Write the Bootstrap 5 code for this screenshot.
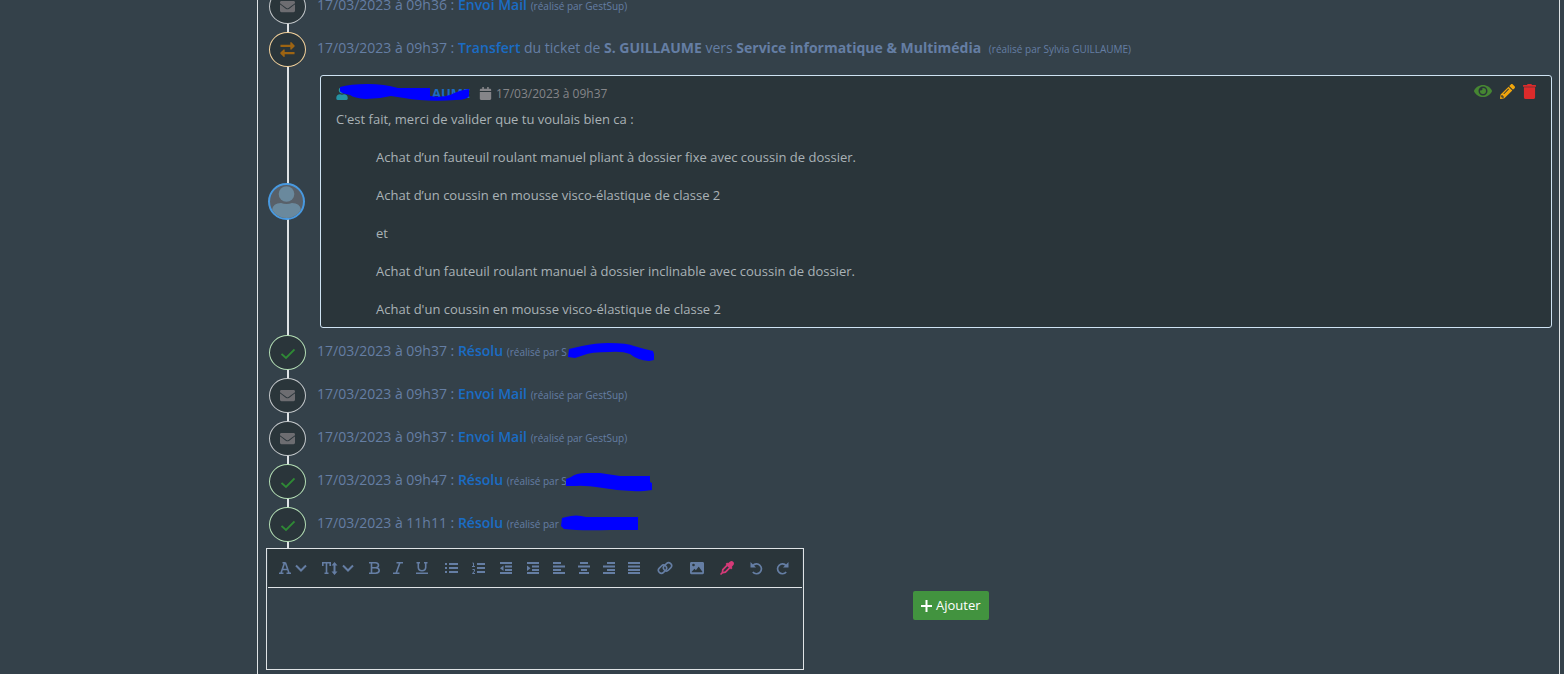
<!DOCTYPE html>
<html lang="fr">
<head>
<meta charset="utf-8">
<meta name="viewport" content="width=device-width, initial-scale=1">
<title>GestSup - Ticket</title>
<link href="https://cdn.jsdelivr.net/npm/bootstrap@5.3.0/dist/css/bootstrap.min.css" rel="stylesheet">
<style>
  :root { --page: #34414a; --deep: #2a353a; --ink: #657ea4; --line: #dfe3e6; }
  body { background: var(--page); color: var(--ink); font-family: "Open Sans", "Noto Sans", sans-serif; font-size: 14px; line-height: 20px; }
  svg { fill: currentColor; display: block; flex: none; }
  .viewport-clip { height: 100vh; overflow: hidden; padding-left: 257px; padding-right: 4px; }
  .ticket { display: flow-root; border: solid var(--line); border-width: 0 1px; min-height: 100vh; padding: 0 7px 0 8px; }
  .timeline { position: relative; margin-top: -11px; padding-bottom: 6px; }
  .timeline::before { content: ""; position: absolute; left: 21px; top: 0; bottom: 0; width: 2px; background: var(--line); }
  .event { position: relative; height: 35px; margin-bottom: 8px; padding-left: 3px; }
  .event:last-child { margin-bottom: 0; }
  .dot { width: 37px; height: 35px; border: 1px solid #c4c8cb; border-radius: 50%; background: var(--deep); color: #6d6d71; flex: none; }
  .dot-ok { border-color: #b4deb5; color: #2f8a35; }
  .dot-move { border-color: #f3d19b; color: #9d6412; }
  .label { margin-left: 11px; padding-bottom: 3px; white-space: nowrap; }
  .label a, .author { color: #1a6cc4; text-decoration: none; font-weight: 600; }
  .label b { font-weight: 700; }
  .by { font-size: 10px; }
  .hidden-name { position: relative; display: inline-block; width: 90px; }
  .hidden-name svg, .author svg { position: absolute; fill: #00f; }
  .hidden-name svg { left: -1px; top: -15px; }
  .author { position: relative; width: 123px; padding-left: 84px; font-weight: 700; font-size: 13px; }
  .author svg { left: -10px; top: 0; }
  .reply { position: relative; padding-left: 2px; margin-bottom: 7px; }
  .avatar { width: 37px; height: 37px; border: 2px solid #4899e0; border-radius: 50%; background: #586069; color: #6a899d; overflow: hidden; flex: none; }
  .message { margin-left: 15px; border: 1px solid #cfe3f3; border-radius: 3px; background: var(--deep); color: #a9b2b6; font-size: 13px; line-height: 19px; padding: 8px 15px 8px; min-width: 0; }
  .message header { color: #858589; height: 18px; margin-bottom: 8px; }
  .message time { font-size: 12px; }
  .message p { margin: 0 0 19px; }
  .message p:last-child { margin-bottom: 0; }
  .quote { margin: 19px 0 0 40px; }
  .tool { background: none; border: 0; padding: 0; }
  .editor { width: 538px; max-width: 100%; border: 1px solid var(--line); }
  .bar { background: var(--deep); height: 39px; margin: 0 1px; padding-left: 8px; border-bottom: 1px solid var(--line); }
  .bar button { background: none; border: 0; padding: 0; color: var(--ink); height: 36px; font: 15px/18px "DejaVu Serif", serif; flex: none; }
  .w-pick { width: 34px; } .w-size { width: 40px; } .w-char { width: 24px; } .w-list { width: 27px; } .w-align { width: 25px; } .w-item { width: 30px; } .w-undo { width: 28px; }
  .lines { fill: none; stroke: currentColor; stroke-width: 2; }
  .area { background: transparent; border: 0; resize: none; height: 81px; color: #a9b2b6; outline: 0; padding: 8px; }
  .glyph { fill: none; stroke: currentColor; stroke-width: 1.6; }
  .btn-add { background: #42933f; color: #fff; border: 0; border-radius: 2px; font-size: 13px; line-height: 19px; padding: 5px 8px; margin: 43px 0 0 109px; }
  .btn-add:hover { background: #37803a; color: #fff; }
</style>
</head>
<body>
<svg width="0" height="0" class="position-absolute" aria-hidden="true">
  <symbol id="mail" viewBox="0 0 512 512"><path d="M502.3 190.8c3.9-3.1 9.7-.2 9.7 4.7V400c0 26.5-21.5 48-48 48H48c-26.5 0-48-21.5-48-48V195.6c0-5 5.7-7.8 9.7-4.7 22.4 17.4 52.1 39.5 154.1 113.6 21.1 15.4 56.7 47.8 92.2 47.6 35.7.3 72-32.8 92.3-47.6 102-74.1 131.6-96.3 154-113.7zM256 320c23.2.4 56.6-29.2 73.4-41.4 132.7-96.3 142.8-104.7 173.4-128.7 5.8-4.5 9.2-11.5 9.2-18.9v-19c0-26.5-21.5-48-48-48H48c-26.5 0-48 21.5-48 48v19c0 7.4 3.4 14.3 9.2 18.9 30.6 23.9 40.7 32.4 173.4 128.7 16.8 12.2 50.2 41.8 73.4 41.4z"/></symbol>
  <symbol id="check" viewBox="0 0 14 14"><path d="M.5 8 5 12 13.500 3.500" fill="none" stroke="currentColor" stroke-width="1.8"/></symbol>
  <symbol id="swap" viewBox="0 0 16 16"><path d="M.5 3H11V.6q.4-.9 1.200-.3l3.300 3.300q.5.600 0 1.200l-3.300 3.200q-.8.500-1.200-.3V5.300H.5zM15.500 13H5v2.400q-.4.900-1.200.3L.5 12.400q-.5-.6 0-1.200L3.800 8q.8-.5 1.200.3v2.400h10.500z"/></symbol>
  <symbol id="chev" viewBox="0 0 12 8"><path d="M1 1.500 6 6.500l5-5" fill="none" stroke="currentColor" stroke-width="2"/></symbol>
</svg>

<div class="viewport-clip">
<main class="ticket">
  <section class="timeline">
    <div class="event d-flex align-items-center"><span class="dot d-flex align-items-center justify-content-center"><svg width="15" height="15"><use href="#mail"/></svg></span>
      <div class="label">17/03/2023 à 09h36 : <a href="#">Envoi Mail</a> <span class="by">(réalisé par GestSup)</span></div></div>
    <div class="event d-flex align-items-center"><span class="dot dot-move d-flex align-items-center justify-content-center"><svg width="15" height="15"><use href="#swap"/></svg></span>
      <div class="label">17/03/2023 à 09h37 : <a href="#">Transfert</a> du ticket de <b>S. GUILLAUME</b> vers <b>Service informatique &amp; Multimédia</b> <span class="by ms-1">(réalisé par Sylvia GUILLAUME)</span></div></div>

    <div class="reply d-flex align-items-center">
      <span class="avatar"><svg width="33" height="33" viewBox="0 0 33 33"><circle cx="16.500" cy="9" r="7.800"/><path d="M2 25q1-7 9-7 5.500 2 11 0 8 0 9 7v8H2z"/></svg></span>
      <article class="message flex-grow-1">
        <header class="d-flex align-items-center">
          <svg width="12" height="13" viewBox="0 0 448 512" color="#2592a2"><path d="M224 256c70.700 0 128-57.300 128-128S294.700 0 224 0 96 57.300 96 128s57.300 128 128 128zm89.600 32h-16.700c-22.200 10.200-46.900 16-72.900 16s-50.600-5.800-72.900-16h-16.700C60.200 288 0 348.200 0 422.400V464c0 26.500 21.500 48 48 48h352c26.500 0 48-21.500 48-48v-41.600c0-74.200-60.200-134.400-134.400-134.400z"/></svg>
          <span class="author">AUME<svg width="132" height="20" viewBox="0 0 132 20" aria-hidden="true"><path d="M2 3Q12 0 30 0q16 0 30 4h32v8q10 2 20-1 10-5 19-6v7q-2 4-13 4-30 2-52-2l-13-2q-12 3-25 3-12-1-16-4-10-2-10-4z"/></svg></span>
          <svg class="ms-2 me-1" width="13" height="13" viewBox="0 0 448 512"><path d="M12 192h424c6.600 0 12 5.400 12 12v260c0 26.500-21.500 48-48 48H48c-26.500 0-48-21.500-48-48V204c0-6.600 5.400-12 12-12zm436-44v-36c0-26.500-21.500-48-48-48h-48V12c0-6.600-5.400-12-12-12h-40c-6.600 0-12 5.400-12 12v52H160V12c0-6.600-5.400-12-12-12h-40c-6.600 0-12 5.400-12 12v52H48C21.500 64 0 85.500 0 112v36c0 6.600 5.400 12 12 12h424c6.600 0 12-5.400 12-12z"/></svg>
          <time datetime="2023-03-17T09:37">17/03/2023 à 09h37</time>
          <div class="d-flex align-items-center gap-2 ms-auto pb-1">
            <button class="tool" type="button" aria-label="Voir"><svg width="18" height="16" viewBox="0 0 576 512" color="#468632"><path d="M572.520 241.400C518.290 135.590 410.930 64 288 64S57.680 135.640 3.480 241.410a32.350 32.350 0 0 0 0 29.190C57.710 376.410 165.070 448 288 448s230.320-71.640 284.520-177.410a32.350 32.350 0 0 0 0-29.190zM288 400a144 144 0 1 1 144-144 143.930 143.930 0 0 1-144 144zm0-240a95.310 95.310 0 0 0-25.310 3.790 47.850 47.850 0 0 1-66.900 66.900A95.780 95.780 0 1 0 288 160z"/></svg></button>
            <button class="tool" type="button" aria-label="Modifier"><svg width="15" height="15" viewBox="0 0 512 512" color="#f0a50c"><path d="M497.900 142.100l-46.100 46.100c-4.700 4.700-12.300 4.700-17 0l-111-111c-4.700-4.700-4.700-12.300 0-17l46.100-46.100c18.700-18.700 49.100-18.700 67.900 0l60.100 60.100c18.800 18.700 18.800 49.100 0 67.900zM284.200 99.800L21.600 362.400.4 483.900c-2.900 16.400 11.400 30.600 27.800 27.800l121.500-21.300 262.600-262.600c4.700-4.700 4.700-12.300 0-17l-111-111c-4.800-4.700-12.400-4.700-17.100 0zM124.100 339.900c-5.500-5.500-5.500-14.300 0-19.800l154-154c5.500-5.500 14.300-5.500 19.800 0s5.500 14.300 0 19.800l-154 154c-5.500 5.500-14.300 5.500-19.800 0zM88 424h48v36.300l-64.500 11.300-31.100-31.100L51.700 376H88v48z"/></svg></button>
            <button class="tool" type="button" aria-label="Supprimer"><svg width="13" height="15" viewBox="0 0 448 512" color="#dc2b2b"><path d="M432 32H312l-9.400-18.700A24 24 0 0 0 281.100 0H166.800a23.720 23.720 0 0 0-21.400 13.300L136 32H16A16 16 0 0 0 0 48v32a16 16 0 0 0 16 16h416a16 16 0 0 0 16-16V48a16 16 0 0 0-16-16zM32 110v354a48 48 0 0 0 48 48h288a48 48 0 0 0 48-48V110z"/></svg></button>
          </div>
        </header>
        C'est fait, merci de valider que tu voulais bien ca :
        <div class="quote">
          <p>Achat d’un fauteuil roulant manuel pliant à dossier fixe avec coussin de dossier.</p>
          <p>Achat d’un coussin en mousse visco-élastique de classe 2</p>
          <p>et</p>
          <p>Achat d'un fauteuil roulant manuel à dossier inclinable avec coussin de dossier.</p>
          <p>Achat d'un coussin en mousse visco-élastique de classe 2</p>
        </div>
      </article>
    </div>

    <div class="event d-flex align-items-center"><span class="dot dot-ok d-flex align-items-center justify-content-center"><svg width="14" height="14"><use href="#check"/></svg></span>
      <div class="label">17/03/2023 à 09h37 : <a href="#">Résolu</a> <span class="by">(réalisé par S<span class="hidden-name"><svg width="90" height="22" viewBox="0 0 90 22" aria-hidden="true"><path d="M3 8 16 5Q30 2 42 2q20 0 26 3 10 3 19 5l1 3v6l-5 1q-12-1-19-7-8-3-20-2-20 0-26 3l-9 3-7-1z"/></svg></span></span></div></div>
    <div class="event d-flex align-items-center"><span class="dot d-flex align-items-center justify-content-center"><svg width="15" height="15"><use href="#mail"/></svg></span>
      <div class="label">17/03/2023 à 09h37 : <a href="#">Envoi Mail</a> <span class="by">(réalisé par GestSup)</span></div></div>
    <div class="event d-flex align-items-center"><span class="dot d-flex align-items-center justify-content-center"><svg width="15" height="15"><use href="#mail"/></svg></span>
      <div class="label">17/03/2023 à 09h37 : <a href="#">Envoi Mail</a> <span class="by">(réalisé par GestSup)</span></div></div>
    <div class="event d-flex align-items-center"><span class="dot dot-ok d-flex align-items-center justify-content-center"><svg width="14" height="14"><use href="#check"/></svg></span>
      <div class="label">17/03/2023 à 09h47 : <a href="#">Résolu</a> <span class="by">(réalisé par S<span class="hidden-name"><svg width="90" height="22" viewBox="0 0 90 22" aria-hidden="true"><path d="M0 9 5 7q5-4 15-4h14l20 3h30v6l2 1v7l-8 1q-20 1-41-3-20-3-27-2H0z"/></svg></span></span></div></div>
    <div class="event d-flex align-items-center"><span class="dot dot-ok d-flex align-items-center justify-content-center"><svg width="14" height="14"><use href="#check"/></svg></span>
      <div class="label">17/03/2023 à 11h11 : <a href="#">Résolu</a> <span class="by">(réalisé par <span class="hidden-name"><svg width="90" height="22" viewBox="0 0 90 22" aria-hidden="true"><path d="M2 5l4-1q10-3 20 0h52v13H50q-30 1-46-1l-3-3z"/></svg></span></span></div></div>
  </section>

  <section class="d-flex align-items-start">
    <div class="editor">
      <div class="bar d-flex align-items-center" role="toolbar" aria-label="Mise en forme">
        <button type="button" class="w-pick d-flex align-items-center justify-content-center gap-1" aria-label="Police"><svg class="glyph" width="12" height="12" viewBox="0 0 12 12"><path d="M0 11.200h4.500M7.500 11.200H12M2 11 5.500 1h1L10 11M3.500 7.500h5M3.500.8H6"/></svg><svg width="12" height="8"><use href="#chev"/></svg></button>
        <button type="button" class="w-size ms-2 d-flex align-items-center justify-content-center" aria-label="Taille"><svg class="glyph" width="9" height="12" viewBox="0 0 9 12"><path d="M.8 4V.8h7.400V4M4.500 1v10M2.500 11.200h4"/></svg><svg width="7" height="13" viewBox="0 0 7 13"><path d="M3.500 0 6.500 3.500h-2v6h2L3.500 13l-3-3.500h2v-6h-2z"/></svg><svg class="ms-1" width="12" height="8"><use href="#chev"/></svg></button>
        <button type="button" class="w-char ms-1 d-flex align-items-center justify-content-center" aria-label="Gras"><svg class="glyph" width="11" height="12" viewBox="0 0 11 12"><path d="M0 .8h6.500q3 .2 3 2.500T6.500 5.800H2.500M6.500 5.800q3.700.2 3.700 2.700t-3.700 2.700H0M2.500 1v10"/></svg></button>
        <button type="button" class="w-char d-flex align-items-center justify-content-center" aria-label="Italique"><svg class="glyph" width="10" height="12" viewBox="0 0 10 12"><path d="M3.500.8H10M0 11.200h6.500M6.800 1 3.200 11"/></svg></button>
        <button type="button" class="w-char d-flex align-items-center justify-content-center" aria-label="Souligné"><svg class="glyph" width="12" height="12" viewBox="0 0 12 12"><path d="M.5.8H4M8 .8h3.500M2.300 1v4.500Q2.500 8.700 6 8.700t3.700-3.200V1M0 11.200h12"/></svg></button>
        <button type="button" class="w-list d-flex justify-content-center align-items-center ms-1" aria-label="Liste à puces"><svg class="lines" width="13" height="12" viewBox="0 0 13 12"><path d="M0 2h2M0 6h2M0 10h2M4 2h9M4 6h9M4 10h9"/></svg></button>
        <button type="button" class="w-list d-flex justify-content-center align-items-center" aria-label="Liste numérotée"><svg class="lines" width="13" height="12" viewBox="0 0 13 12"><path d="M5 2h8M5 6h8M5 10h8"/><path stroke-width="1" d="M.5 1h1v4M0 4.500h3M.5 7.500h2v1.500l-2 2.500H3"/></svg></button>
        <button type="button" class="w-list d-flex justify-content-center align-items-center" aria-label="Diminuer le retrait"><svg class="lines" width="12" height="12" viewBox="0 0 12 12"><path d="M0 1h12M5 4.500h7M5 8h7M0 11h12"/><path fill="currentColor" stroke="none" d="M3.500 3.500v5.500L0 6.200z"/></svg></button>
        <button type="button" class="w-list d-flex justify-content-center align-items-center" aria-label="Augmenter le retrait"><svg class="lines" width="12" height="12" viewBox="0 0 12 12"><path d="M0 1h12M5 4.500h7M5 8h7M0 11h12"/><path fill="currentColor" stroke="none" d="M0 3.500v5.500l3.500-2.800z"/></svg></button>
        <button type="button" class="w-align d-flex justify-content-center align-items-center" aria-label="Aligner à gauche"><svg class="lines" width="12" height="12" viewBox="0 0 12 12"><path d="M0 1h8M0 4.500h12M0 8h8M0 11h12"/></svg></button>
        <button type="button" class="w-align d-flex justify-content-center align-items-center" aria-label="Centrer"><svg class="lines" width="12" height="12" viewBox="0 0 12 12"><path d="M2 1h8M0 4.500h12M3 8h6M1 11h10"/></svg></button>
        <button type="button" class="w-align d-flex justify-content-center align-items-center" aria-label="Aligner à droite"><svg class="lines" width="12" height="12" viewBox="0 0 12 12"><path d="M4 1h8M0 4.500h12M4 8h8M0 11h12"/></svg></button>
        <button type="button" class="w-align d-flex justify-content-center align-items-center" aria-label="Justifier"><svg class="lines" width="12" height="12" viewBox="0 0 12 12"><path d="M0 1h12M0 4.500h12M0 8h12M0 11h12"/></svg></button>
        <button type="button" class="w-item ms-1 d-flex justify-content-center align-items-center" aria-label="Lien"><svg class="glyph" width="16" height="14" viewBox="0 0 16 14"><rect x="-4.500" y="-3" width="9" height="6" rx="3" transform="translate(5.500 8.200) rotate(-45)"/><rect x="-4.500" y="-3" width="9" height="6" rx="3" transform="translate(10.500 5.800) rotate(-45)"/></svg></button>
        <button type="button" class="w-item d-flex justify-content-center align-items-center ps-1" aria-label="Image"><svg width="14" height="14" viewBox="0 0 512 512"><path fill-rule="evenodd" d="M464 480H48c-26 0-48-21-48-48V80c0-26 21-48 48-48h416c26 0 48 21 48 48v352c0 26-21 48-48 48zM128 96a48 48 0 1 0 0 96 48 48 0 0 0 0-96zM70 410h372q18 0 10-18L330 215q-12-14-24 0L215 340l-40-48q-10-12-20 0L62 395q-6 15 8 15z"/></svg></button>
        <button type="button" class="w-item d-flex justify-content-center align-items-center ps-1" aria-label="Effacer la couleur"><svg width="14" height="14" viewBox="0 0 14 14" color="#d63a78"><path d="M8 2.300 9.800.8q1.800-1.500 3.400 0 1.500 1.500 0 3.400l-1.500 1.800.8.900-1.500 1.500-.8-.8L5.800 12l-3 .4L1 14 0 13l1.600-1.800.4-3L6.400 3.800l-.8-.8 1.500-1.500zM7.400 5.200 3.700 9l-.4 1.700L5 10.300l3.800-3.700z"/></svg></button>
        <button type="button" class="w-undo d-flex justify-content-center align-items-center ps-1" aria-label="Annuler"><svg width="13" height="13" viewBox="0 0 13 13"><path d="M.5 0v5.500H6L4 3.600z"/><path d="M2.800 3.700A4.900 4.900 0 1 1 2.800 10" style="fill:none" stroke="currentColor" stroke-width="1.700"/></svg></button>
        <button type="button" class="w-undo d-flex justify-content-center align-items-center" aria-label="Rétablir"><svg width="13" height="13" viewBox="0 0 13 13"><path d="M12.500 0v5.500H7l2-1.900z"/><path d="M10.200 3.700A4.900 4.900 0 1 0 10.200 10" style="fill:none" stroke="currentColor" stroke-width="1.700"/></svg></button>
      </div>
      <textarea class="area d-block w-100" aria-label="Message"></textarea>
    </div>
    <button type="button" class="btn btn-add d-flex align-items-center gap-1"><svg width="11" height="12" viewBox="0 0 11 12"><path d="M4.500 0h2v5H11v2H6.500v5h-2V7H0V5h4.500z"/></svg>Ajouter</button>
  </section>
</main>
</div>
<script src="https://cdn.jsdelivr.net/npm/bootstrap@5.3.0/dist/js/bootstrap.bundle.min.js"></script>
</body>
</html>
